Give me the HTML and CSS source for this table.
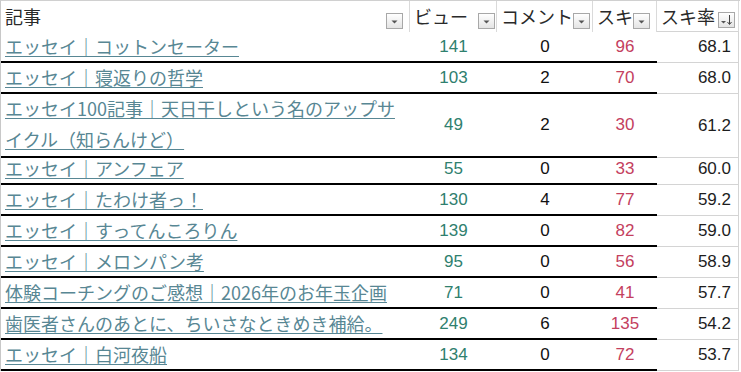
FILE: index.html
```html
<!DOCTYPE html>
<html lang="ja">
<head>
<meta charset="utf-8">
<title>記事</title>
<link rel="stylesheet" href="styles.css">
</head>
<body>
<div class="sheet">
  <div class="row head">
    <div class="c a"><span class="ht">記事</span><span class="fb"><svg viewBox="0 0 15 14" width="15" height="14"><path d="M4.5 6.5h6l-3 3z" fill="#555"/></svg></span></div>
    <div class="c b"><span class="ht">ビュー</span><span class="fb"><svg viewBox="0 0 15 14" width="15" height="14"><path d="M4.5 6.5h6l-3 3z" fill="#555"/></svg></span></div>
    <div class="c cc"><span class="ht">コメント</span><span class="fb"><svg viewBox="0 0 15 14" width="15" height="14"><path d="M4.5 6.5h6l-3 3z" fill="#555"/></svg></span></div>
    <div class="c d"><span class="ht">スキ</span><span class="fb"><svg viewBox="0 0 15 14" width="15" height="14"><path d="M4.5 6.5h6l-3 3z" fill="#555"/></svg></span></div>
    <div class="c e"><span class="ht">スキ率</span><span class="fb"><svg viewBox="0 0 15 14" width="15" height="14"><path d="M2 8h5l-2.5 2.5z" fill="#555"/><path d="M10.5 2v9" stroke="#444" stroke-width="1"/><path d="M8.5 9l2 2.5 2-2.5" fill="none" stroke="#444" stroke-width="1"/></svg></span></div>
  </div>

  <div class="row">
    <div class="c a"><span class="link">エッセイ｜コットンセーター</span></div>
    <div class="c b n v">141</div><div class="c cc n">0</div><div class="c d n s">96</div><div class="c e n r">68.1</div>
  </div>
  <div class="row">
    <div class="c a"><span class="link">エッセイ｜寝返りの哲学</span></div>
    <div class="c b n v">103</div><div class="c cc n">2</div><div class="c d n s">70</div><div class="c e n r">68.0</div>
  </div>
  <div class="row tall">
    <div class="c a wrap"><span class="link">エッセイ100記事｜天日干しという名のアップサ</span><br><span class="link">イクル（知らんけど）</span></div>
    <div class="c b n v">49</div><div class="c cc n">2</div><div class="c d n s">30</div><div class="c e n r">61.2</div>
  </div>
  <div class="row">
    <div class="c a"><span class="link">エッセイ｜アンフェア</span></div>
    <div class="c b n v">55</div><div class="c cc n">0</div><div class="c d n s">33</div><div class="c e n r">60.0</div>
  </div>
  <div class="row">
    <div class="c a"><span class="link">エッセイ｜たわけ者っ！</span></div>
    <div class="c b n v">130</div><div class="c cc n">4</div><div class="c d n s">77</div><div class="c e n r">59.2</div>
  </div>
  <div class="row">
    <div class="c a"><span class="link">エッセイ｜すってんころりん</span></div>
    <div class="c b n v">139</div><div class="c cc n">0</div><div class="c d n s">82</div><div class="c e n r">59.0</div>
  </div>
  <div class="row">
    <div class="c a"><span class="link">エッセイ｜メロンパン考</span></div>
    <div class="c b n v">95</div><div class="c cc n">0</div><div class="c d n s">56</div><div class="c e n r">58.9</div>
  </div>
  <div class="row">
    <div class="c a"><span class="link">体験コーチングのご感想｜2026年のお年玉企画</span></div>
    <div class="c b n v">71</div><div class="c cc n">0</div><div class="c d n s">41</div><div class="c e n r">57.7</div>
  </div>
  <div class="row">
    <div class="c a"><span class="link">歯医者さんのあとに、ちいさなときめき補給。</span></div>
    <div class="c b n v">249</div><div class="c cc n">6</div><div class="c d n s">135</div><div class="c e n r">54.2</div>
  </div>
  <div class="row">
    <div class="c a"><span class="link">エッセイ｜白河夜船</span></div>
    <div class="c b n v">134</div><div class="c cc n">0</div><div class="c d n s">72</div><div class="c e n r">53.7</div>
  </div>
</div>
</body>
</html>
```
FILE: styles.css
```css
html, body {
  margin: 0;
  padding: 0;
  background: #fff;
}
body {
  font-family: "Liberation Sans", "Noto Sans CJK JP", sans-serif;
  color: #1a1a1a;
  overflow: hidden;
}
.sheet {
  width: 739px;
  border-top: 1px solid #d0d0d0;
  border-left: 1px solid #c8c8c8;
}
.row {
  display: grid;
  grid-template-columns: 409px 87px 96px 64px 82px;
  height: 31px;
}
.row.tall {
  height: 60px;
}
.c {
  box-sizing: border-box;
  display: flex;
  align-items: center;
  min-width: 0;
}
.row > .a, .row > .b, .row > .cc, .row > .d {
  border-bottom: 2px solid #000;
}
.row > .e {
  border-right: 1px solid #d4d4d4;
  border-bottom: 1px solid #d4d4d4;
}

/* header */
.row.head > .c {
  border-bottom: none;
  border-right: 1px solid #dadada;
  justify-content: space-between;
  align-items: stretch;
}
.row.head > .e {
  border-bottom: 1px solid #d4d4d4;
}
.ht {
  font-family: "Noto Sans CJK JP", sans-serif;
  font-size: 18px;
  line-height: 30px;
  color: #2a2a2a;
  white-space: nowrap;
}
.head .a { padding: 0 6px 0 4px; }
.head .b { padding: 0 1px 0 4px; }
.head .cc { padding: 0 5px 0 4px; }
.head .d { padding: 0 6px 0 4px; }
.head .e { padding: 0 3px 0 4px; }
.fb {
  align-self: flex-end;
  margin-bottom: 3px;
  width: 15px;
  height: 14px;
  border: 1px solid #a8a8a8;
  background: linear-gradient(#ffffff, #e4e4e4);
  display: block;
  flex: none;
}
.fb svg {
  display: block;
}

/* data */
.a {
  padding-left: 4px;
  white-space: nowrap;
}
.a.wrap {
  display: block;
  white-space: nowrap;
  line-height: 29px;
}
.link {
  font-family: "Noto Sans CJK JP", sans-serif;
  font-size: 18px;
  line-height: 29px;
  color: #588794;
  text-decoration: underline;
  text-decoration-thickness: 1px;
  text-underline-offset: 2px;
}
.n {
  font-size: 17px;
  justify-content: center;
  color: #111;
}
.n.v { color: #2f806e; }
.n.s { color: #c4405e; }
.n.r {
  justify-content: flex-end;
  padding-right: 7px;
  color: #1d1d1d;
}
```
